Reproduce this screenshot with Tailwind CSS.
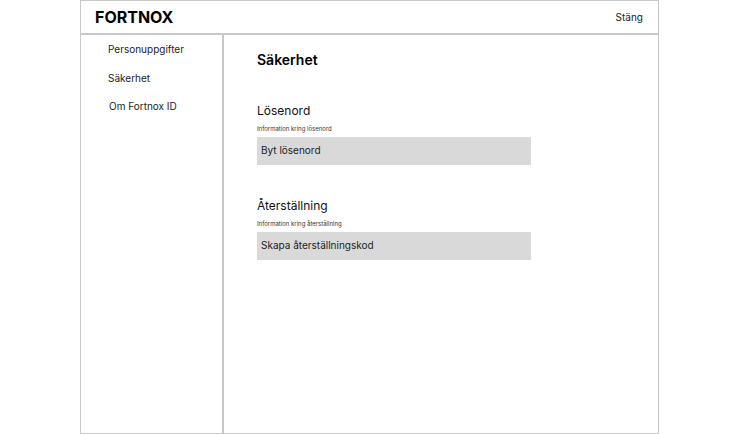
<!DOCTYPE html>
<html lang="sv">
<head>
    <meta charset="UTF-8">
    <title>Säkerhet</title>
    <script src="https://cdn.jsdelivr.net/npm/@tailwindcss/browser@4"></script>
</head>
<body class="bg-white font-['Inter',sans-serif] text-black antialiased">
    <div class="ml-[80px] w-[579px] h-[434px] border border-[#c8c8c8] flex flex-col">
        <!-- Topbar -->
        <header class="h-[34px] shrink-0 border-b-2 border-[#c8c8c8] flex items-center justify-between pl-[14px] pr-[15px]">
            <span class="text-[16px] font-bold leading-none">FORTNOX</span>
            <a class="text-[10px] leading-[16px] text-[#222]">Stäng</a>
        </header>
        <div class="flex flex-1 min-h-0">
            <!-- Sidomeny -->
            <nav class="w-[143px] shrink-0 border-r-2 border-[#c8c8c8] pt-[6px] pl-[27px] text-[10px] text-[#222] flex flex-col gap-[12.5px]">
                <a class="leading-[16px]">Personuppgifter</a>
                <a class="leading-[16px]">Säkerhet</a>
                <a class="leading-[16px] pl-px">Om Fortnox ID</a>
            </nav>
            <main class="flex-1 pl-[33px] pt-[15px]">
                <h1 class="text-[14px] font-semibold leading-[20px]">Säkerhet</h1>
                <section class="mt-[32px]">
                    <h2 class="text-[12px] leading-[18px] text-[#111]">Lösenord</h2>
                    <p class="text-[6px] leading-[8px] mt-[5px] text-[#333]">Information kring lösenord</p>
                    <div class="mt-[4px] w-[274px] h-[28px] bg-[#d9d9d9] flex items-center pl-[4px] pb-[2px] text-[10px] text-[#222]">Byt lösenord</div>
                </section>
                <section class="mt-[32px]">
                    <h2 class="text-[12px] leading-[18px] text-[#111]">Återställning</h2>
                    <p class="text-[6px] leading-[8px] mt-[5px] text-[#333]">Information kring återställning</p>
                    <div class="mt-[4px] w-[274px] h-[28px] bg-[#d9d9d9] flex items-center pl-[4px] pb-[2px] text-[10px] text-[#222]">Skapa återställningskod</div>
                </section>
            </main>
        </div>
    </div>
</body>
</html>
